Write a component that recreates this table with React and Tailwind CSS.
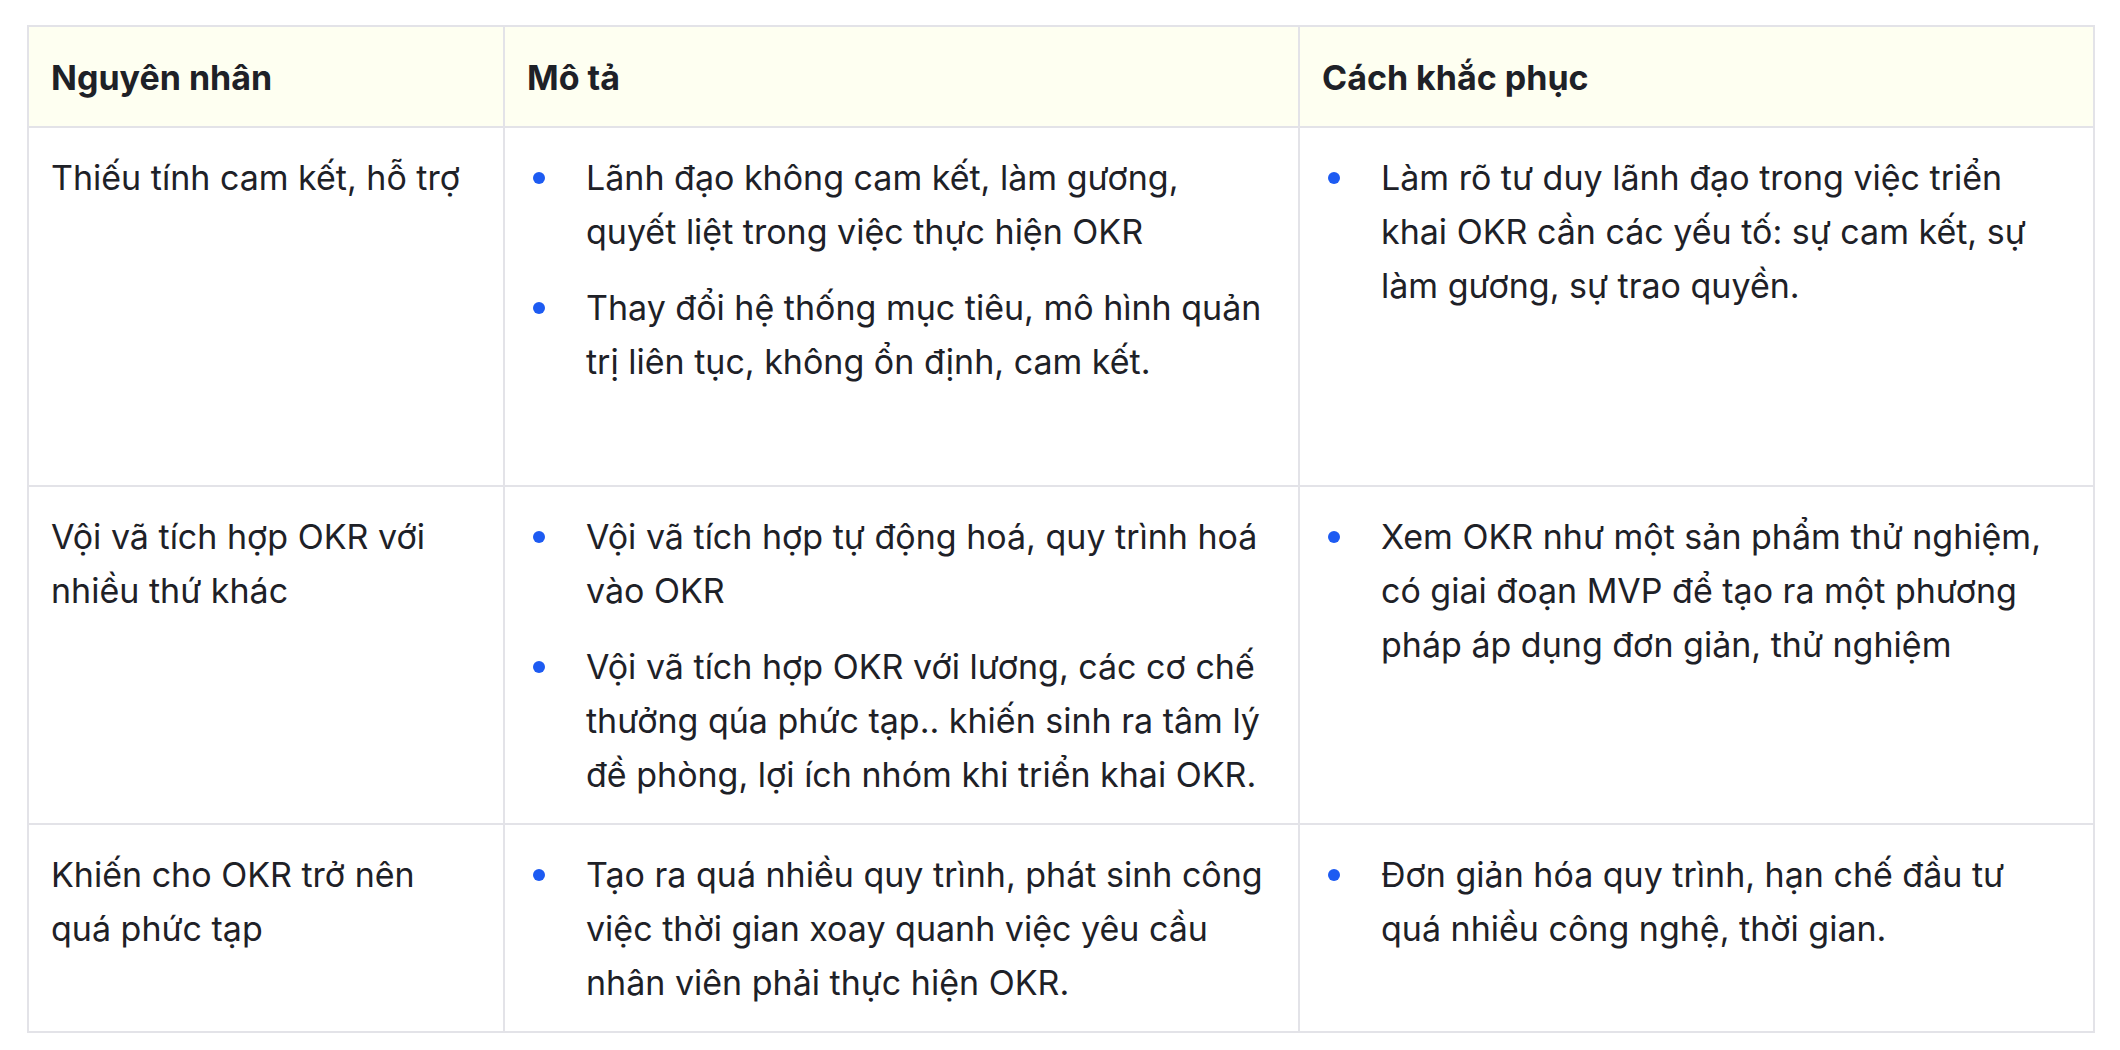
import React from 'react';

const rows = [
  {
    cause: "Thiếu tính cam kết, hỗ trợ",
    desc: [
      "Lãnh đạo không cam kết, làm gương, quyết liệt trong việc thực hiện OKR",
      "Thay đổi hệ thống mục tiêu, mô hình quản trị liên tục, không ổn định, cam kết.",
    ],
    fix: [
      "Làm rõ tư duy lãnh đạo trong việc triển khai OKR cần các yếu tố: sự cam kết, sự làm gương, sự trao quyền.",
    ],
    tall: true,
  },
  {
    cause: "Vội vã tích hợp OKR với nhiều thứ khác",
    desc: [
      "Vội vã tích hợp tự động hoá, quy trình hoá vào OKR",
      "Vội vã tích hợp OKR với lương, các cơ chế thưởng qúa phức tạp.. khiến sinh ra tâm lý đề phòng, lợi ích nhóm khi triển khai OKR.",
    ],
    fix: [
      "Xem OKR như một sản phẩm thử nghiệm, có giai đoạn MVP để tạo ra một phương pháp áp dụng đơn giản, thử nghiệm",
    ],
  },
  {
    cause: "Khiến cho OKR trở nên quá phức tạp",
    desc: [
      "Tạo ra quá nhiều quy trình, phát sinh công việc thời gian xoay quanh việc yêu cầu nhân viên phải thực hiện OKR.",
    ],
    fix: ["Đơn giản hóa quy trình, hạn chế đầu tư quá nhiều công nghệ, thời gian."],
  },
];

function Bullets({ items }) {
  return (
    <ul className="flex flex-col gap-[22px]">
      {items.map((t, i) => (
        <li key={i} className="flex items-start">
          {/* dot sits in a fixed gutter so wrapped lines align */}
          <span className="w-[59px] shrink-0 flex pl-[6px] pt-[21px]">
            <span className="w-[12px] h-[12px] rounded-full bg-[#1d5bf2]"></span>
          </span>
          <span>{t}</span>
        </li>
      ))}
    </ul>
  );
}

export default function App() {
  return (
    <div className="bg-white min-h-screen pt-[25px] pl-[27px] font-['Inter',sans-serif] text-[34px] leading-[54px] text-[#1e2127]">
      <table className="table-fixed w-[2068px] border-collapse border-2 border-[#e3e3e8]">
        <colgroup>
          <col className="w-[476px]" />
          <col className="w-[795px]" />
          <col className="w-[795px]" />
        </colgroup>
        <thead>
          <tr className="bg-[#fefff1]">
            <th className="border-2 border-[#e3e3e8] px-[22px] pt-[24px] pb-[21px] text-left font-bold">Nguyên nhân</th>
            <th className="border-2 border-[#e3e3e8] px-[22px] pt-[24px] pb-[21px] text-left font-bold">Mô tả</th>
            <th className="border-2 border-[#e3e3e8] px-[22px] pt-[24px] pb-[21px] text-left font-bold">Cách khắc phục</th>
          </tr>
        </thead>
        <tbody>
          {rows.map((r, i) => (
            <tr key={i} className={r.tall ? "h-[359px]" : ""}>
              <td className="border-2 border-[#e3e3e8] px-[22px] pt-[23px] pb-[21px] align-top">{r.cause}</td>
              <td className="border-2 border-[#e3e3e8] px-[22px] pt-[23px] pb-[21px] align-top">
                <Bullets items={r.desc} />
              </td>
              <td className="border-2 border-[#e3e3e8] px-[22px] pt-[23px] pb-[21px] align-top">
                <Bullets items={r.fix} />
              </td>
            </tr>
          ))}
        </tbody>
      </table>
    </div>
  );
}
